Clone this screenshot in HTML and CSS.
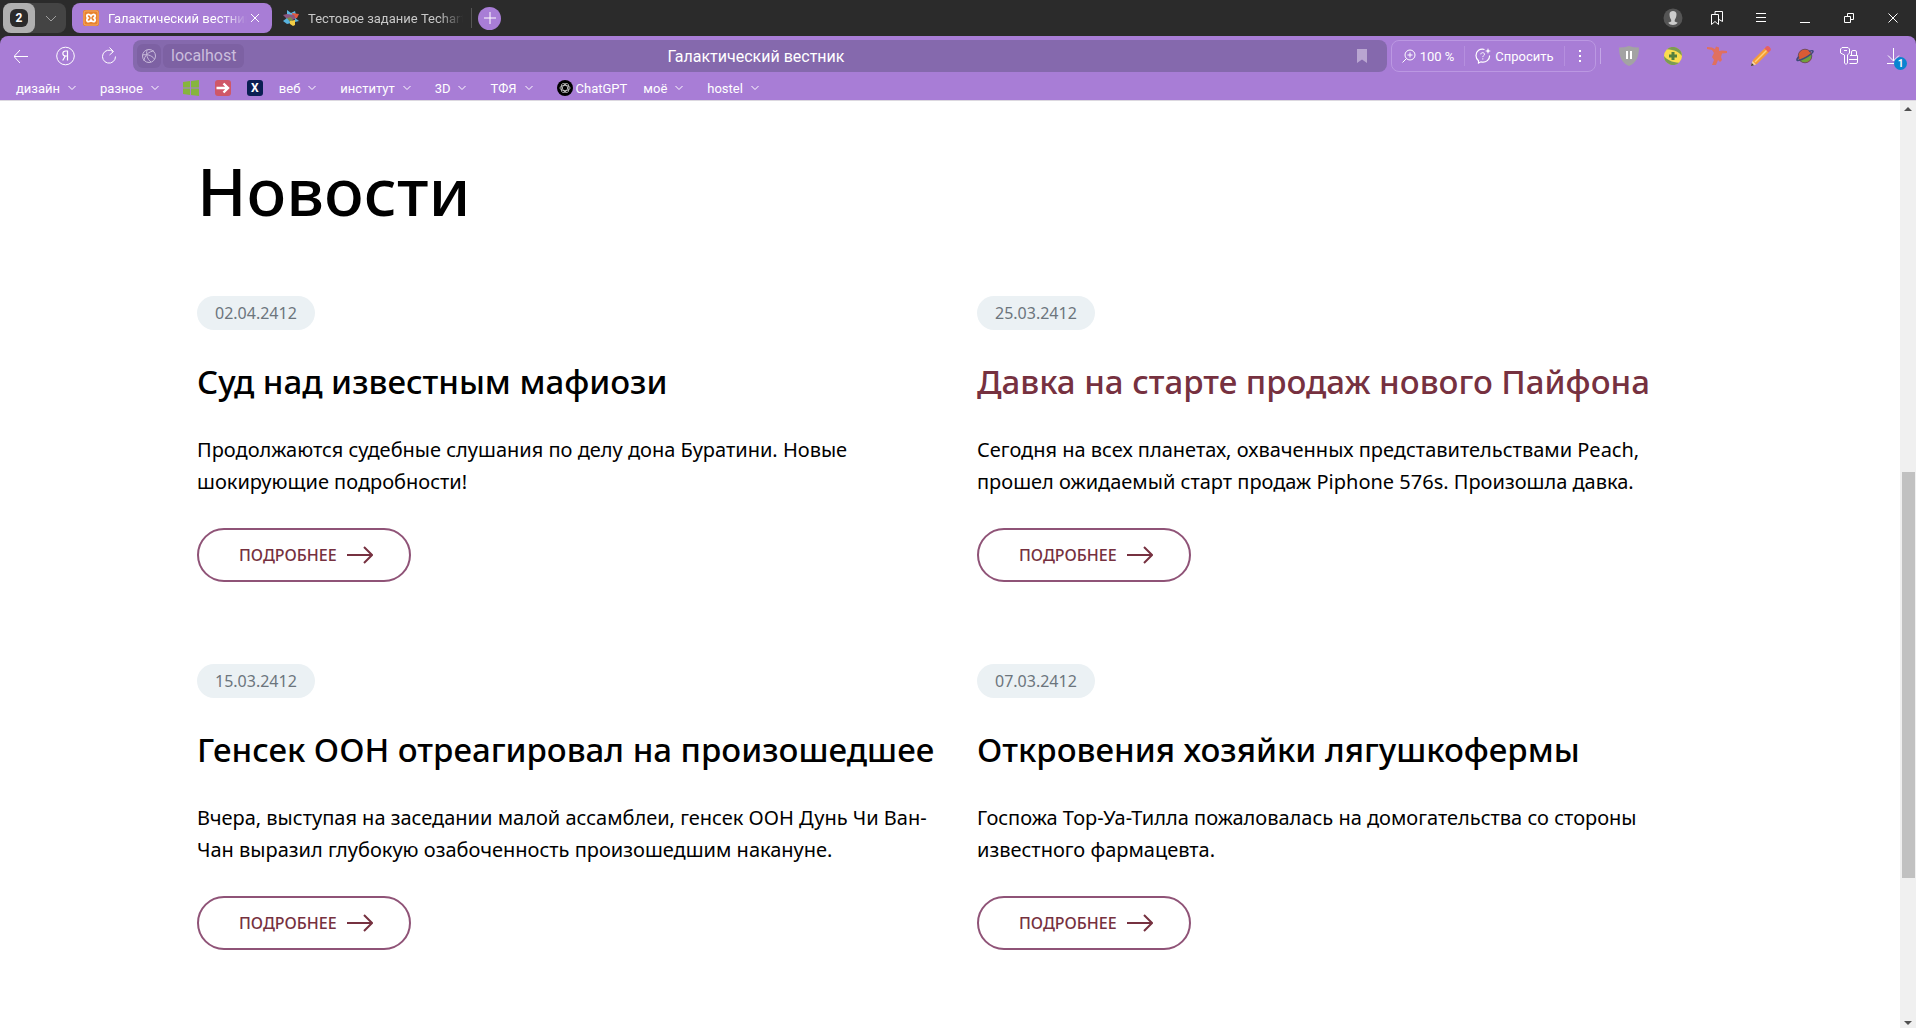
FILE: index.html
```html
<!DOCTYPE html>
<html lang="ru">
<head>
<meta charset="utf-8">
<meta name="viewport" content="width=device-width, initial-scale=1">
<title>Галактический вестник</title>
<link rel="stylesheet" href="styles.css">
</head>
<body>
<svg class="sprite" aria-hidden="true">
  <symbol id="chev" viewBox="0 0 8 8"><path d="M.5 2 4 5.500 7.500 2" fill="none" stroke="currentColor"/></symbol>
  <symbol id="arrow" viewBox="0 0 26 20"><path d="M0 10H25M17 2l8 8-8 8" fill="none" stroke="currentColor" stroke-width="2"/></symbol>
</svg>

<header class="browser">
  <div class="tabstrip">
    <div class="tabgroup">
      <button class="tabcount" aria-label="Вкладки"><span class="tabcount-num">2</span></button>
      <button class="tabmenu" aria-label="Список вкладок"><svg width="12" height="12" viewBox="0 0 12 12"><path d="M1 4l5 5 5-5" fill="none" stroke="#a0a0a0"/></svg></button>
    </div>
    <div class="tab tab-active">
      <svg width="16" height="16" viewBox="0 0 16 16"><rect width="16" height="16" rx="2" fill="#e8822e"/><rect x="1" y="1" width="14" height="14" rx="2" fill="none" stroke="#f7b87c" stroke-width=".7"/><path d="M8 6.200C7 4 3.800 3.800 3.800 6c0 1 .6 1.500 1.200 2-.6.500-1.200 1-1.200 2C3.800 12.200 7 12 8 9.800 9 12 12.200 12.200 12.200 10c0-1-.6-1.500-1.200-2 .6-.5 1.200-1 1.200-2C12.200 3.800 9 4 8 6.200z" fill="none" stroke="#fff" stroke-width="1.800"/></svg>
      <span class="tab-title">Галактический вестник</span>
      <button class="tab-close" aria-label="Закрыть"><svg width="10" height="10" viewBox="0 0 10 10"><path d="M1 1l8 8M9 1L1 9" stroke="#fff"/></svg></button>
    </div>
    <div class="tab tab-idle">
      <svg width="16" height="16" viewBox="0 0 16 16"><path d="M4 0l4 3 4-2 1 4-4 3-5-1z" fill="#5db8e4"/><path d="M9 3l7 1-2 4-4 1z" fill="#e2583e"/><path d="M0 5l4-1 7 1 2 4-5 1-4-1z" fill="#8b5680"/><path d="M0 11l4-3 3 2 1 3-4 1z" fill="#58b3df"/><path d="M4 8l4-1 2 3-3 2z" fill="#7b8a4a"/><path d="M12 8l4 3-4 1z" fill="#58b3df"/><path d="M7 11l5-1v5l-2 1-3-2z" fill="#f3cd45"/></svg>
      <span class="tab-title">Тестовое задание Techart</span>
    </div>
    <button class="newtab" aria-label="Новая вкладка"><svg width="12" height="12" viewBox="0 0 12 12"><path d="M6 0v12M0 6h12" stroke="#fff"/></svg></button>
    <div class="cells window-cells">
      <button class="cell" aria-label="Профиль"><svg width="20" height="20" viewBox="0 0 20 20"><circle cx="10" cy="10" r="9.500" fill="#555"/><path d="M6.500 6c0-4 7-4 7 0 0 3-.8 4.500-1.800 6v1.500l3 1.300c-2.500 3-7 3-9.500 0l3-1.300V12C7.300 10.500 6.500 9 6.500 6z" fill="#ccc"/></svg></button>
      <button class="cell" aria-label="Закладки"><svg width="14" height="16" viewBox="0 0 14 16"><path d="M1.500 4.500h7v10L5 11.500l-3.500 3zM5 4V1.500h7.500v10L9 9.500" fill="none" stroke="#fff"/></svg></button>
      <button class="cell" aria-label="Меню"><svg width="10" height="10" viewBox="0 0 10 10"><path d="M0 .5h10M0 4.500h10M0 8.500h10" stroke="#fff"/></svg></button>
      <button class="cell" aria-label="Свернуть"><svg width="10" height="10" viewBox="0 0 10 10"><path d="M0 9.500h10" stroke="#fff"/></svg></button>
      <button class="cell" aria-label="Восстановить"><svg width="10" height="10" viewBox="0 0 10 10"><path d="M.5 3.500h6v6h-6zM3.500 3V.5h6v6H7" fill="none" stroke="#fff"/></svg></button>
      <button class="cell" aria-label="Закрыть окно"><svg width="10" height="10" viewBox="0 0 10 10"><path d="M.5.5l9 9M9.500.5l-9 9" stroke="#fff"/></svg></button>
    </div>
  </div>

  <div class="panel">
    <div class="toolbar">
      <div class="cells nav-cells">
        <button class="cell" aria-label="Назад"><svg width="16" height="16" viewBox="0 0 16 16"><path d="M14 8.500H0M6 2L0 8.500 6 15" fill="none" stroke="#fff"/></svg></button>
        <button class="cell" aria-label="Яндекс"><svg width="20" height="20" viewBox="0 0 20 20"><circle cx="9.500" cy="10" r="8.800" fill="none" stroke="#fff"/><path d="M11.500 14.500v-9.500h-1.800c-3.800 0-3.800 5 0 5h1.800M9.300 10l-2.600 4.500" fill="none" stroke="#fff" stroke-width="1.200"/></svg></button>
        <button class="cell" aria-label="Обновить"><svg width="16" height="18" viewBox="0 0 16 18"><path d="M11 4.500A6.500 6.500 0 1 0 13.500 9.500M7.500.5L11.500 4.500 7.500 8" fill="none" stroke="#fff"/></svg></button>
      </div>
      <div class="address">
        <div class="address-chips">
          <button class="chip chip-site" aria-label="О сайте"><svg width="16" height="16" viewBox="0 0 16 16"><g fill="none" stroke="#c9bbdb"><circle cx="8" cy="8" r="6.500"/><path d="M3 13C3 8 8 3 13 3M1.500 7c4-1 9 0 12 4M6 2c-1 4 0 9 4 12"/></g></svg></button>
          <button class="chip chip-host">localhost</button>
        </div>
        <span class="address-title">Галактический вестник</span>
        <button class="bookmark" aria-label="В закладки"><svg width="10" height="14" viewBox="0 0 10 14"><path d="M0 0h10v14L5 10.500 0 14z" fill="#b9a6d1"/></svg></button>
      </div>
      <div class="tools">
        <button class="tool tool-zoom"><svg width="14" height="14" viewBox="0 0 14 14"><g fill="none" stroke="#fff"><circle cx="8" cy="6" r="5"/><path d="M4.500 9.500L.5 13.500M8 3.500v5M5.500 6h5"/></g></svg>100 %</button>
        <button class="tool tool-ask"><svg width="16" height="16" viewBox="0 0 16 16"><path d="M9.500 1.500C5 .3 1 3 1 7.500c0 2.200.9 4 2.500 5.200V15l2.500-1.200C11 15 15 11.500 14.500 7.500" fill="none" stroke="#fff" stroke-width="1.200"/><path d="M5.800 6.300c0-2.200 3.700-2.200 3.700 0 0 1.300-1.700 1.300-1.700 2.800M7.800 10.300v1.200" fill="none" stroke="#fff"/><path d="M13 0l.8 2.200L16 3l-2.200.8L13 6l-.8-2.200L10 3l2.200-.8z" fill="#fff"/></svg>Спросить</button>
        <button class="tool tool-more" aria-label="Ещё"><svg width="4" height="14" viewBox="0 0 4 14"><path d="M1 1h2v2H1zM1 6h2v2H1zM1 11h2v2H1z" fill="#fff"/></svg></button>
      </div>
      <div class="cells extensions">
        <button class="cell" aria-label="Защита"><svg width="20" height="20" viewBox="0 0 20 20"><path d="M0 1.500Q6 1.500 10 0q4 1.500 10 1.500C20 11 17 17 10 20 3 17 0 11 0 1.500z" fill="#a3a3a3"/><path d="M8 5v8M12 5v8" stroke="#fff" stroke-width="2"/></svg></button>
        <button class="cell" aria-label="Расширение"><svg width="18" height="18" viewBox="0 0 18 18"><circle cx="9" cy="9" r="9" fill="#fbdc4d"/><path d="M3 2.300A9 9 0 0 1 18 9C15.500 5.500 10 2.500 3 2.300zM15 15.700A9 9 0 0 1 0 9c2.500 3.500 8 6.500 15 6.700z" fill="#7c9c52"/><path d="M9 5v8M5 9h8" stroke="#55803e" stroke-width="3"/></svg></button>
        <button class="cell" aria-label="Расширение"><svg width="20" height="20" viewBox="0 0 20 20"><path d="M0 1l5 .5L8 3l1-2.500 3 1L12 5l3-.5 5 .5v2l-5 .5L14 11l1 3-2 2-2-2-2 5H5l2-5-2-3 2-4-2-3-5-1z" fill="#e0705f"/></svg></button>
        <button class="cell" aria-label="Расширение"><svg width="20" height="20" viewBox="0 0 20 20"><path d="M0 20l2-6L14 2l4 4L6 18z" fill="#f59b38"/><path d="M4 16L16 4" stroke="#ffd27a" stroke-width="1.500"/><path d="M13.500 2.500L15 .8q1.500-1.500 3.500.2t1 3.500L17.500 6.500z" fill="#e86161"/><path d="M1.500 15l3.500 3.500L0 20z" fill="#f6d6a5"/><path d="M.8 17L3 19.200 0 20z" fill="#333"/></svg></button>
        <button class="cell" aria-label="Расширение"><svg width="18" height="18" viewBox="0 0 18 18"><circle cx="9" cy="9" r="7" fill="#d95b35"/><path d="M3 13L16 7c1 6-7 12-13 6z" fill="#70a03b"/><path d="M13 4.500c5-2 5 0 2 2.500S4 14 1.500 13.500c-1.500-.5.500-3 1.500-3.800" fill="none" stroke="#3d4a7a" stroke-width="1.600"/><circle cx="9" cy="9" r="6.800" fill="none" stroke="#584a66" stroke-width=".8"/></svg></button>
        <button class="cell" aria-label="Пароли"><svg width="18" height="18" viewBox="0 0 18 18"><g fill="none" stroke="#fff"><path d="M2 .5h6L9.500 2v4L7.500 8v8L6 17.500 4.500 16V8L.5 6V2zM4 3.500h3"/><path d="M11.500 8V5q0-1.500 1.500-1.500h2q1.500 0 1.500 1.500v3M10 8.500h7.500v4H9M17.500 12v3q0 1.500-1.500 1.500H9.500"/></g></svg></button>
        <button class="cell cell-download" aria-label="Загрузки"><svg width="16" height="16" viewBox="0 0 16 16"><path d="M8.500 0v13M3 7.500L8.500 13 14 7.500M2 15.500h11" fill="none" stroke="#fff"/></svg><span class="badge">1</span></button>
      </div>
    </div>

    <nav class="bookmarks">
      <a class="bm bm-folder" href="#">дизайн<svg width="8" height="8"><use href="#chev"/></svg></a>
      <a class="bm bm-folder" href="#">разное<svg width="8" height="8"><use href="#chev"/></svg></a>
      <a class="bm" href="#" aria-label="Windows"><svg width="16" height="16" viewBox="0 0 16 16"><path d="M0 2l7-1v6.500H0zM8 1l8-1v7.500H8zM0 8.500h7V15l-7-1zM8 8.500h8V16l-8-1z" fill="#86b53d"/></svg></a>
      <a class="bm" href="#" aria-label="Переход"><svg width="16" height="16" viewBox="0 0 16 16"><rect width="16" height="16" rx="3" fill="#cf5768"/><path d="M1.500 8H13M8.500 3.500L13 8l-4.500 4.500" fill="none" stroke="#fff" stroke-width="2.400"/></svg></a>
      <a class="bm" href="#"><span class="bm-x">X</span></a>
      <a class="bm bm-folder" href="#">веб<svg width="8" height="8"><use href="#chev"/></svg></a>
      <a class="bm bm-folder" href="#">институт<svg width="8" height="8"><use href="#chev"/></svg></a>
      <a class="bm bm-folder" href="#">3D<svg width="8" height="8"><use href="#chev"/></svg></a>
      <a class="bm bm-folder" href="#">ТФЯ<svg width="8" height="8"><use href="#chev"/></svg></a>
      <a class="bm bm-site" href="#"><svg width="16" height="16" viewBox="0 0 16 16"><circle cx="8" cy="8" r="8" fill="#000"/><g fill="none" stroke="#ccc" stroke-width=".8"><ellipse cx="8" cy="8" rx="5" ry="2.600"/><ellipse cx="8" cy="8" rx="5" ry="2.600" transform="rotate(60 8 8)"/><ellipse cx="8" cy="8" rx="5" ry="2.600" transform="rotate(120 8 8)"/></g></svg>ChatGPT</a>
      <a class="bm bm-folder" href="#">моё<svg width="8" height="8"><use href="#chev"/></svg></a>
      <a class="bm bm-folder" href="#">hostel<svg width="8" height="8"><use href="#chev"/></svg></a>
    </nav>
  </div>
</header>

<div class="viewport">
  <main class="page">
    <h1 class="page-title">Новости</h1>
    <div class="news">
      <article class="item">
        <time class="date">02.04.2412</time>
        <h2 class="item-title">Суд над известным мафиози</h2>
        <p class="item-text">Продолжаются судебные слушания по делу дона Буратини. Новые шокирующие подробности!</p>
        <a class="more" href="#">Подробнее<svg width="26" height="20"><use href="#arrow"/></svg></a>
      </article>
      <article class="item">
        <time class="date">25.03.2412</time>
        <h2 class="item-title item-title-hover">Давка на старте продаж нового Пайфона</h2>
        <p class="item-text">Сегодня на всех планетах, охваченных представительствами Peach, прошел ожидаемый старт продаж Piphone 576s. Произошла давка.</p>
        <a class="more" href="#">Подробнее<svg width="26" height="20"><use href="#arrow"/></svg></a>
      </article>
      <article class="item">
        <time class="date">15.03.2412</time>
        <h2 class="item-title">Генсек ООН отреагировал на произошедшее</h2>
        <p class="item-text">Вчера, выступая на заседании малой ассамблеи, генсек ООН Дунь Чи Ван-Чан выразил глубокую озабоченность произошедшим накануне.</p>
        <a class="more" href="#">Подробнее<svg width="26" height="20"><use href="#arrow"/></svg></a>
      </article>
      <article class="item">
        <time class="date">07.03.2412</time>
        <h2 class="item-title">Откровения хозяйки лягушкофермы</h2>
        <p class="item-text">Госпожа Тор-Уа-Тилла пожаловалась на домогательства со стороны известного фармацевта.</p>
        <a class="more" href="#">Подробнее<svg width="26" height="20"><use href="#arrow"/></svg></a>
      </article>
    </div>
  </main>
  <div class="scrollbar" aria-hidden="true">
    <svg width="16" height="16" viewBox="0 0 16 16"><path d="M8 6l4 4H4z" fill="#505050"/></svg>
    <div class="track-before"></div>
    <div class="thumb"></div>
    <div class="track-after"></div>
    <svg width="16" height="16" viewBox="0 0 16 16"><path d="M8 13L4 9h8z" fill="#505050"/></svg>
  </div>
</div>
</body>
</html>
```
FILE: styles.css
```css
* {
  box-sizing: border-box;
}

body {
  margin: 0;
  height: 100vh;
  display: flex;
  flex-direction: column;
  overflow: hidden;
  background: #fff;
  color: #000;
  font-family: "Noto Sans", "Open Sans", sans-serif;
}

button {
  margin: 0;
  padding: 0;
  border: 0;
  background: none;
  color: inherit;
  font: inherit;
}

a {
  color: inherit;
  text-decoration: none;
}

svg {
  flex: none;
  display: block;
}

.sprite {
  position: absolute;
  width: 0;
  height: 0;
}

/* Browser window */
.browser {
  flex: none;
  background: #2b2b2b;
  color: #fff;
  font-family: Roboto, "Open Sans", sans-serif;
  font-size: 13px;
  border-bottom: 1px solid #dcd8e0;
}

.tabstrip {
  display: flex;
  align-items: center;
  height: 36px;
  padding: 0 1px 0 3px;
}

.tabgroup {
  display: flex;
  width: 63px;
  height: 30px;
  margin-right: 6px;
  border-radius: 8px;
  background: #444;
}

.tabcount {
  display: grid;
  place-items: center;
  width: 32px;
  border-radius: 8px;
  background: #b0b0b0;
}

.tabcount-num {
  width: 18px;
  height: 18px;
  border-radius: 6px;
  background: #2b2b2b;
  font-size: 12px;
  font-weight: 700;
  line-height: 18px;
}

.tabmenu {
  flex: 1;
  display: grid;
  place-items: center;
}

.tab {
  display: flex;
  align-items: center;
  gap: 9px;
  width: 200px;
  height: 30px;
  padding: 0 11px;
  border-radius: 8px;
}

.tab-active {
  padding-right: 10px;
  background: #a87dd6;
}

.tab-idle {
  padding-right: 9px;
  border-radius: 0;
  color: #c8c8c8;
  background: linear-gradient(#555, #555) right / 1px 20px no-repeat;
}

.tab-title {
  flex: 1;
  min-width: 0;
  overflow: hidden;
  white-space: nowrap;
  -webkit-mask-image: linear-gradient(to left, transparent, #000 24px);
  mask-image: linear-gradient(to left, transparent, #000 24px);
}

.tab-active .tab-title {
  margin-right: -8px;
}

.tab-close {
  padding: 2px;
}

.newtab {
  display: grid;
  place-items: center;
  width: 23px;
  height: 23px;
  margin-left: 6px;
  border-radius: 50%;
  background: #a87dd6;
}

.cells {
  display: flex;
  flex: none;
}

.nav-cells {
  padding-right: 1px;
}

.window-cells {
  margin-left: auto;
}

.cell {
  display: grid;
  place-items: center;
  width: 44px;
  height: 32px;
}

.panel {
  height: 64px;
  padding-top: 4px;
  border-radius: 8px 8px 0 0;
  background: #a87dd6;
}

.toolbar {
  display: flex;
  height: 32px;
  padding-right: 1px;
}

.address {
  flex: 1;
  display: grid;
  grid-template-columns: 1fr auto 1fr;
  align-items: center;
  padding: 0 12px 0 4px;
  border-radius: 8px;
  background: #8569ad;
  font-size: 16px;
}

.address-chips {
  display: flex;
  gap: 2px;
}

.chip {
  height: 24px;
  border-radius: 6px;
  background: #7d61a3;
  color: #cbbedd;
}

.chip-site {
  display: grid;
  place-items: center;
  width: 24px;
}

.chip-host {
  padding: 0 8px;
  line-height: 24px;
}

.bookmark {
  justify-self: end;
  padding: 4px 8px;
}

.tools {
  display: flex;
  align-items: center;
  margin-left: 4px;
  border: 1px solid #bb98e2;
  border-radius: 8px;
}

.tool {
  display: flex;
  align-items: center;
  justify-content: center;
  gap: 4px;
  height: 20px;
}

.tool + .tool {
  border-left: 1px solid #b58fde;
}

.tool-zoom {
  width: 72px;
}

.tool-ask {
  width: 100px;
}

.tool-more {
  width: 31px;
}

.extensions {
  align-items: center;
  padding-left: 4px;
}

.extensions::before {
  content: "";
  width: 1px;
  height: 16px;
  margin-right: 6px;
  background: #c4a7e6;
}

.cell-download {
  position: relative;
}

.badge {
  position: absolute;
  right: 8px;
  bottom: 2px;
  width: 13px;
  height: 13px;
  border-radius: 50%;
  background: #0a84d0;
  font-size: 10px;
  font-weight: 700;
  line-height: 13px;
}

.bookmarks {
  display: flex;
  align-items: center;
  gap: 16px;
  height: 28px;
  padding: 4px 16px 0;
}

.bm {
  display: flex;
  align-items: center;
  height: 24px;
}

.bm-folder {
  gap: 8px;
  padding-right: 8px;
}

.bm-site {
  gap: 3px;
}

.bm-x {
  width: 16px;
  height: 16px;
  border-radius: 3px;
  background: #0a1f52;
  font-size: 12px;
  font-weight: 700;
  line-height: 16px;
  text-align: center;
}

/* News page */
.viewport {
  flex: 1;
  min-height: 0;
  display: flex;
}

.page {
  flex: 1;
  min-width: 0;
  overflow: hidden;
  padding: 46px 183px 0 197px;
}

.page-title {
  margin: 0 0 62px;
  font-size: 66px;
  font-weight: 500;
  line-height: 87px;
}

.news {
  display: grid;
  grid-template-columns: 1fr 1fr;
  gap: 82px 40px;
}

.item {
  display: flex;
  flex-direction: column;
  align-items: flex-start;
}

.date {
  padding: 0 18px;
  border-radius: 17px;
  background: #ebf1f4;
  color: #6c757d;
  font-size: 16px;
  line-height: 34px;
}

.item-title {
  margin: 30px 0;
  font-size: 33px;
  font-weight: 500;
  line-height: 44px;
}

.item-title-hover {
  color: #763140;
}

.item-text {
  margin: 0 0 30px;
  font-size: 20px;
  line-height: 32px;
}

.more {
  display: flex;
  align-items: center;
  gap: 10px;
  height: 54px;
  padding: 0 36px 0 40px;
  border: 2px solid #8f5377;
  border-radius: 27px;
  color: #763140;
  font-size: 16px;
  font-weight: 500;
  text-transform: uppercase;
}

.scrollbar {
  flex: none;
  display: flex;
  flex-direction: column;
  width: 16px;
  background: #f0f0f0;
}

.track-before {
  flex: 355;
}

.thumb {
  flex: 407;
  margin: 0 1px 0 2px;
  background: #c1c1c1;
}

.track-after {
  flex: 134;
}
```
